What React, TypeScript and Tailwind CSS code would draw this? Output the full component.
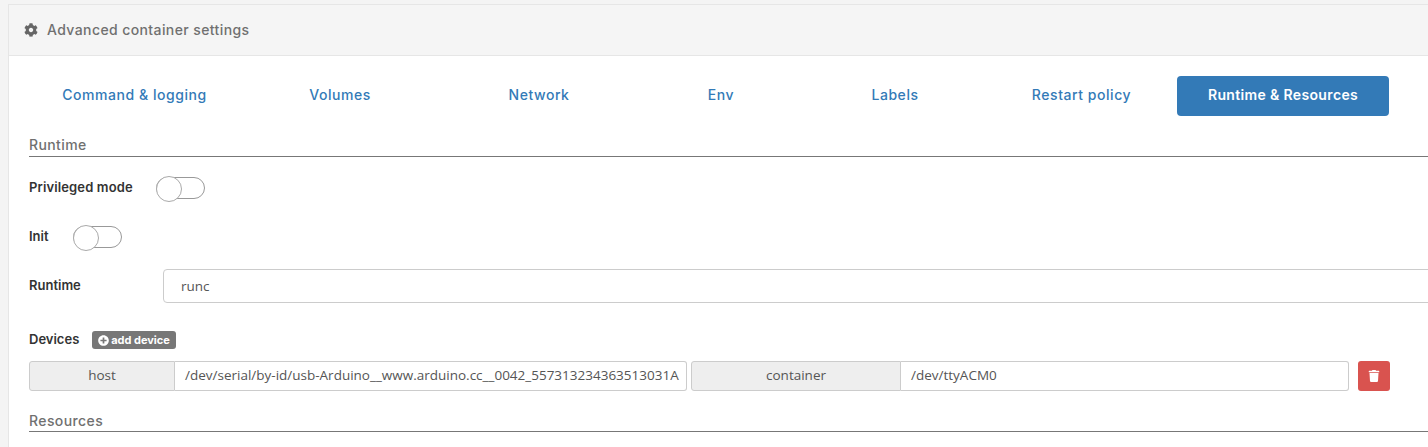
import { FaCog, FaTrash, FaPlusCircle } from 'react-icons/fa';

const tabs = [
  { label: 'Command & logging', width: 'w-[211px]' },
  { label: 'Volumes', width: 'w-[200px]' },
  { label: 'Network', width: 'w-[198px]' },
  { label: 'Env', width: 'w-[166px]' },
  { label: 'Labels', width: 'w-[182px]' },
  { label: 'Restart policy', width: 'w-[191px]' },
];

function SectionTitle({ children, className }: { children: string; className: string }) {
  return (
    <div className={`border-b border-[#777] text-[14px] leading-[20px] tracking-[0.4px] text-[#707070] font-medium ${className}`}>
      {children}
    </div>
  );
}

function Toggle() {
  return (
    <div className="relative h-[22px] w-[49px] rounded-full border border-[#999] bg-white">
      <div className="absolute -left-px -top-[2px] h-[26px] w-[26px] rounded-full border border-[#aaa] bg-white" />
    </div>
  );
}

function Addon({ children, className }: { children: string; className: string }) {
  return (
    <div className={`flex items-center justify-center rounded-l-[3px] border border-[#ccc] bg-[#eee] pb-px text-[13.5px] text-[#555] ${className}`}>
      {children}
    </div>
  );
}

export default function App() {
  return (
    <div className="h-[447px] w-[1428px] overflow-hidden bg-[#f4f4f4] pl-[8px] pt-[4px] font-['Inter',sans-serif]">
      <div className="h-[443px] w-[1420px] overflow-hidden border-l border-t border-[#e6e6e6] bg-white">
        <div className="flex h-[51px] items-center gap-[9px] border-b border-[#e6e6e6] bg-[#f5f5f5] pl-[15px] text-[14px] text-[#707070] font-medium">
          <FaCog size={14} className="text-[#666]" />
          <span className="-mt-[2px] tracking-[0.4px]">Advanced container settings</span>
        </div>

        <div className="pl-[20px] pt-[20px]">
          <div className="flex h-[40px]">
            {tabs.map((t) => (
              <div key={t.label} className={`flex items-center justify-center pb-[3px] text-[14px] font-medium tracking-[0.55px] text-[#337ab7] ${t.width}`}>
                {t.label}
              </div>
            ))}
            <div className="flex w-[212px] items-center justify-center rounded-[4px] bg-[#337ab7] pb-[3px] text-[14px] font-semibold tracking-[0.35px] text-white">
              Runtime &amp; Resources
            </div>
          </div>

          <SectionTitle className="mt-[19px] h-[22px] w-[1400px]">Runtime</SectionTitle>

          <div className="mt-[19px] flex h-[24px] items-center">
            <span className="w-[127px] text-[13px] font-semibold tracking-[0.13px] text-[#333]">Privileged mode</span>
            <Toggle />
          </div>

          <div className="mt-[25px] flex h-[24px] items-center">
            <span className="w-[44px] text-[13px] font-semibold text-[#333]">Init</span>
            <Toggle />
          </div>

          <div className="mt-[20px] flex h-[34px] items-center">
            <span className="w-[134px] shrink-0 text-[13px] font-semibold text-[#333]">Runtime</span>
            <div className="flex h-[34px] w-[1320px] shrink-0 items-center rounded-l-[4px] border border-[#ccc] pl-[17px] font-['Open_Sans',sans-serif] text-[13.5px] text-[#555]">
              runc
            </div>
          </div>

          <div className="mt-[28px] flex h-[18px] items-center">
            <span className="w-[63px] text-[13px] font-semibold text-[#333]">Devices</span>
            <span className="flex h-[18px] w-[84px] items-center justify-center gap-[2px] rounded-[3px] bg-[#777] text-[11px] font-bold text-white">
              <FaPlusCircle size={11} />
              add device
            </span>
          </div>

          <div className="mt-[12px] flex h-[30px] font-['Open_Sans',sans-serif]">
            <Addon className="w-[146px]">host</Addon>
            <div className="flex w-[512px] items-center overflow-hidden whitespace-nowrap rounded-r-[3px] border border-l-0 border-[#ccc] pb-px pl-[10px] text-[13.5px] text-[#555]">
              /dev/serial/by-id/usb-Arduino__www.arduino.cc__0042_557313234363513031A
            </div>
            <Addon className="ml-[4px] w-[210px]">container</Addon>
            <div className="flex w-[448px] items-center rounded-r-[3px] border border-l-0 border-[#ccc] pb-px pl-[10px] text-[13.5px] text-[#555]">
              /dev/ttyACM0
            </div>
            <div className="ml-[9px] flex w-[32px] items-center justify-center rounded-[3px] bg-[#d9534f] text-white">
              <FaTrash size={12} />
            </div>
          </div>

          <SectionTitle className="mt-[19px] h-[22px] w-[1400px] pt-px">Resources</SectionTitle>
        </div>
      </div>
    </div>
  );
}
